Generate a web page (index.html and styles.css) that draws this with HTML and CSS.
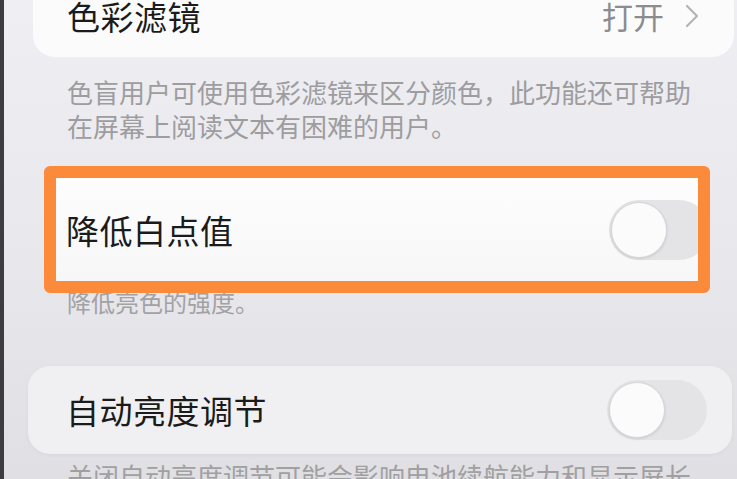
FILE: index.html
```html
<!DOCTYPE html>
<html lang="zh-CN">
<head>
  <meta charset="UTF-8">
  <meta name="viewport" content="width=device-width, initial-scale=1.0">
  <title>辅助功能</title>
  <link rel="stylesheet" href="styles.css">
</head>
<body>
  <div class="screen">
    <div class="card card-top">
      <span class="title">色彩滤镜</span>
      <span class="value">打开
        <svg class="chevron" width="16" height="26" viewBox="0 0 16 26">
          <path d="M3 3 L13 13 L3 23" fill="none" stroke="#b4b4b6" stroke-width="2.2" stroke-linecap="round" stroke-linejoin="round"/>
        </svg>
      </span>
    </div>
    <p class="desc">色盲用户可使用色彩滤镜来区分颜色，此功能还可帮助<br>在屏幕上阅读文本有困难的用户。</p>

    <div class="mark">
      <span class="title">降低白点值</span>
      <div class="toggle"><div class="knob"></div></div>
    </div>
    <p class="desc desc-small">降低亮色的强度。</p>

    <div class="card card-auto">
      <span class="title">自动亮度调节</span>
      <div class="toggle"><div class="knob"></div></div>
    </div>
    <p class="desc desc-last">关闭自动亮度调节可能会影响电池续航能力和显示屏长</p>
  </div>
</body>
</html>
```

FILE: styles.css
```css
body {
  margin: 0;
  font-family: "Noto Sans CJK SC", "Noto Sans", sans-serif;
  background: #e6e5ea;
}
.screen {
  height: 479px;
  overflow: hidden;
  border-left: 4px solid #3d3d3f;
  background: linear-gradient(#efeef2, #e9e8ed 50%, #e0dfe3);
}
.card {
  display: flex;
  align-items: center;
  justify-content: space-between;
  border-radius: 22px;
}
.title {
  font-size: 33px;
  color: #1b1b1b;
  letter-spacing: 0.5px;
}
.card-top {
  margin: -26px 3px 0 29px;
  height: 83px;
  padding: 0 30px 0 34px;
  background: #fbfbfc;
}
.value {
  display: flex;
  align-items: center;
  gap: 20px;
  font-size: 31px;
  color: #8c8c8e;
  margin-right: 4px;
}
.desc {
  margin: 18px 0 0 63px;
  font-size: 26px;
  line-height: 34px;
  color: #9d9d9f;
}
.mark {
  position: relative;
  z-index: 1;
  margin: 23px 0 0 40px;
  width: 632px;
  height: 103px;
  border: 12px solid #fc8a3b;
  border-radius: 6px;
  background: linear-gradient(#fdfdfd, #f7f7f8);
  display: flex;
  align-items: center;
  justify-content: space-between;
  padding-left: 10px;
  overflow: hidden;
}
.mark .toggle {
  margin-right: -11px;
}
.desc-small {
  margin-top: -6px;
  font-size: 24px;
  line-height: 30px;
  color: #a2a2a4;
}
.card-auto {
  margin: 49px 5px 0 24px;
  height: 88px;
  padding: 0 25px 0 38px;
  background: #f0f0f2;
  box-shadow: 0 1px 4px rgba(0, 0, 0, 0.04);
}
.toggle {
  width: 100px;
  height: 60px;
  border-radius: 30px;
  background: #e4e4e6;
  display: flex;
  align-items: center;
}
.knob {
  width: 54px;
  height: 54px;
  margin-left: 2px;
  border-radius: 50%;
  background: #fbfbfb;
  border: 1px solid #d6d6d8;
  box-shadow: 0 1px 3px rgba(0, 0, 0, 0.12);
}
.desc-last {
  margin-top: 5px;
  color: #a0a0a2;
}
```
